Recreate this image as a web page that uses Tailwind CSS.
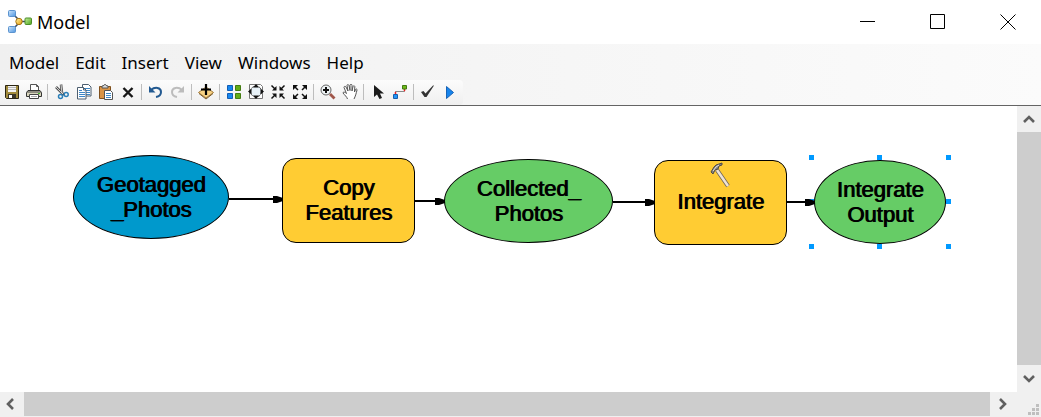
<!DOCTYPE html>
<html lang="en">
<head>
<meta charset="utf-8">
<meta name="viewport" content="width=device-width, initial-scale=1">
<title>Model</title>
<script src="https://cdn.jsdelivr.net/npm/@tailwindcss/browser@4"></script>
</head>
<body class="flex h-screen flex-col overflow-hidden bg-white font-['Noto_Sans','Open_Sans',sans-serif] text-black">

<header class="flex h-11 shrink-0 items-center pl-2">
  <svg class="h-6 w-6" viewBox="0 0 24 24" aria-hidden="true">
    <defs>
      <linearGradient id="blueBox" x2="1" y2="1"><stop stop-color="#cfe6fb"/><stop offset="1" stop-color="#4c94e0"/></linearGradient>
      <linearGradient id="greenBox" x2="1" y2="1"><stop stop-color="#c6ee9c"/><stop offset="1" stop-color="#4aa31c"/></linearGradient>
      <linearGradient id="goldDot" x2="1" y2="1"><stop stop-color="#fff3a0"/><stop offset="1" stop-color="#e39a08"/></linearGradient>
    </defs>
    <path d="M6 5l5 5M6 18l5-5M13 11.500h6" stroke="#3c4a5c" stroke-width="1.500" fill="none"/>
    <rect x=".5" y="3.500" width="7" height="6" rx="1" transform="translate(0 -3)" fill="url(#blueBox)" stroke="#5b93cf"/>
    <rect x=".5" y="16.500" width="7" height="6" rx="1" fill="url(#blueBox)" stroke="#5b93cf"/>
    <circle cx="11" cy="11.500" r="3.200" fill="url(#goldDot)" stroke="#a87412"/>
    <rect x="17" y="8" width="6.500" height="6.500" rx="1" fill="url(#greenBox)" stroke="#4b8d28"/>
  </svg>
  <h1 class="pl-[5px] text-[18px] leading-6">Model</h1>
  <div class="ml-auto flex h-full gap-[22px] pr-[9px]">
    <button class="flex w-12 items-center justify-center" aria-label="Minimize"><svg class="h-4 w-4" viewBox="0 0 16 16"><path d="M0 7.500h15" stroke="#000"/></svg></button>
    <button class="flex w-12 items-center justify-center" aria-label="Maximize"><svg class="h-4 w-4" viewBox="0 0 16 16"><path d="M.5.500h14v14H.5z" fill="none" stroke="#000"/></svg></button>
    <button class="flex w-12 items-center justify-center" aria-label="Close"><svg class="h-4 w-4" viewBox="0 0 16 16"><path d="M.5.500l15 15M15.500.500l-15 15" stroke="#000"/></svg></button>
  </div>
</header>

<div class="shrink-0 border-b border-[#646464] bg-linear-to-r from-[#f0f0f0] to-[#fbfbfb]">
  <nav class="flex h-9 items-center gap-4 pl-[9px] pt-[2px] text-[17px] leading-6" aria-label="Menu bar">
    <button>Model</button><button>Edit</button><button>Insert</button><button>View</button><button>Windows</button><button>Help</button>
  </nav>
  <div class="flex h-[25px] w-[463px] items-center rounded-r-sm bg-linear-to-b from-[#fcfcfc] to-[#efefef] pb-[2px] pl-px" role="toolbar" aria-label="Model tools">
    <button class="flex w-[22px] justify-center" aria-label="Save"><svg class="h-4 w-4" viewBox="0 0 16 16"><path d="M1.500 1.500h13v13h-12l-1-1z" fill="#a28b3c" stroke="#2c2613"/><path d="M4 2h8v6H4z" fill="#f4f4f4"/><path d="M4 3.500h8M4 5.500h8" stroke="#b9b9b9"/><path d="M4 10h8v4H4z" fill="#3a3629"/><path d="M5 11h3v3H5z" fill="#fff"/></svg></button>
    <button class="flex w-[22px] justify-center" aria-label="Print"><svg class="h-4 w-4" viewBox="0 0 16 16"><path d="M4.500 7V.5h6l2 2V7z" fill="#fff" stroke="#555"/><path d="M10.500.500v2h2" fill="none" stroke="#555"/><path d="M2 6.500h12l1.500 2v4h-15v-4z" fill="#d8d5bd" stroke="#333"/><path d="M1 8h14" stroke="#444"/><path d="M12 9.500h2" stroke="#45b82c"/><path d="M3.500 10.500h9v4h-9z" fill="#fff" stroke="#444"/><path d="M5 12.500h6" stroke="#aaa"/></svg></button>
    <span class="ml-[2px] mr-[3px] h-4 w-px bg-[#bdbdbd]"></span>
    <button class="flex w-[22px] justify-center" aria-label="Cut"><svg class="h-4 w-4" viewBox="0 0 16 16"><path d="M2 3l8 8M7 .500l1 9" stroke="#555" stroke-width="2.600"/><path d="M2 3l7 7M7 .500l1 9" stroke="#eee" stroke-width=".8"/><circle cx="6.500" cy="12.500" r="2" fill="none" stroke="#2b7fb8" stroke-width="1.500"/><circle cx="12.200" cy="10.500" r="2" fill="none" stroke="#2b7fb8" stroke-width="1.500"/></svg></button>
    <button class="flex w-[22px] justify-center" aria-label="Copy"><svg class="h-4 w-4" viewBox="0 0 16 16"><path d="M6.500.500h6l2.500 2.500v9H6.500z" fill="#fff" stroke="#4d5f70"/><path d="M8 4.500h6M8 6.500h6M8 8.500h6M8 10.500h6" stroke="#3d87c7"/><path d="M1.500 3.500h6l2.500 2.500v9H1.500z" fill="#fff" stroke="#4d5f70"/><path d="M7.500 3.500V6H10" fill="none" stroke="#4d5f70"/><path d="M3 6.500h3M3 8.500h6M3 10.500h6M3 12.500h6" stroke="#3d87c7"/></svg></button>
    <button class="flex w-[22px] justify-center" aria-label="Paste"><svg class="h-4 w-4" viewBox="0 0 16 16"><path d="M1.500 2.500h11v12h-11z" fill="#d99345" stroke="#80501d"/><path d="M4 4V2l2-.5.500-1h1L8 1.500l2 .500v2z" fill="#ddd" stroke="#555"/><path d="M6.500 6.500h6l2 2v7h-8z" fill="#fff" stroke="#555"/><path d="M8 9.500h5M8 11.500h5M8 13.500h5" stroke="#3d87c7"/></svg></button>
    <button class="flex w-[22px] justify-center" aria-label="Delete"><svg class="h-4 w-4" viewBox="0 0 16 16"><path d="M3.500 4l9 9M12.500 4l-9 9" stroke="#171717" stroke-width="2.400"/></svg></button>
    <span class="ml-[2px] mr-[3px] h-4 w-px bg-[#bdbdbd]"></span>
    <button class="flex w-[22px] justify-center" aria-label="Undo"><svg class="h-4 w-4" viewBox="0 0 16 16"><path d="M3 6c4-3.500 10-2.500 10 2 0 3-2 4.500-5 5" fill="none" stroke="#235a91" stroke-width="2"/><path d="M1 2v6.500h6.500z" fill="#235a91"/></svg></button>
    <button class="flex w-[22px] justify-center" aria-label="Redo" disabled><svg class="h-4 w-4" viewBox="0 0 16 16"><path d="M12 6C8 2.500 2 3.500 2 8c0 3 2 4.500 5 5" fill="none" stroke="#bcbcbc" stroke-width="2"/><path d="M14 2v6.500H7.500z" fill="#bcbcbc"/></svg></button>
    <span class="ml-[2px] mr-[3px] h-4 w-px bg-[#bdbdbd]"></span>
    <button class="flex w-[22px] justify-center" aria-label="Add data or tool"><svg class="h-4 w-4" viewBox="0 0 16 16"><path d="M8 3l7.500 5.500L8 14 .5 8.500z" fill="#f8d283" stroke="#a27a3b"/><path d="M1 9.500l7 5.500 7-5.500" fill="none" stroke="#7c5c2b"/><path d="M8 0v11M3 5.500h10" stroke="#000" stroke-width="2.200"/></svg></button>
    <span class="ml-[2px] mr-[3px] h-4 w-px bg-[#bdbdbd]"></span>
    <button class="flex w-[22px] justify-center" aria-label="Auto layout"><svg class="h-4 w-4" viewBox="0 0 16 16"><path d="M1.500 1.500h5v5h-5zM1.500 9.500h5v5h-5z" fill="#1687ef" stroke="#125db4"/><path d="M9.500 1.500h5v5h-5zM9.500 9.500h5v5h-5z" fill="#62ad16" stroke="#447c12"/></svg></button>
    <button class="flex w-[22px] justify-center" aria-label="Full extent"><svg class="h-4 w-4" viewBox="0 0 16 16"><path d="M1.500.500h11l2 2v12h-13z" fill="#fff" stroke="#777"/><circle cx="8" cy="7.500" r="5.500" fill="#e8f2f8" stroke="#555" stroke-dasharray="3 1"/><path d="M8 0l3 3.500H5zM8 15l3-3.500H5zM0 7.500l3.500-3v6zM16 7.500l-3.500-3v6z" fill="#111"/></svg></button>
    <button class="flex w-[22px] justify-center" aria-label="Fixed zoom out"><svg class="h-4 w-4" viewBox="0 0 16 16"><path d="M1.500 1.500l4 4M14.500 1.500l-4 4M1.500 14.500l4-4M14.500 14.500l-4-4" stroke="#111" stroke-width="1.500"/><path d="M6.500 2v4.500H2zM9.500 2v4.500H14zM6.500 14V9.500H2zM9.500 14V9.500H14z" fill="#111"/></svg></button>
    <button class="flex w-[22px] justify-center" aria-label="Fixed zoom in"><svg class="h-4 w-4" viewBox="0 0 16 16"><path d="M2 2l4 4M14 2l-4 4M2 14l4-4M14 14l-4-4" stroke="#111" stroke-width="1.500"/><path d="M1 1h5L1 6zM15 1h-5l5 5zM1 15h5l-5-5zM15 15h-5l5-5z" fill="#111"/></svg></button>
    <span class="ml-[2px] mr-[3px] h-4 w-px bg-[#bdbdbd]"></span>
    <button class="flex w-[22px] justify-center" aria-label="Zoom in"><svg class="h-4 w-4" viewBox="0 0 16 16"><path d="M10 10l4.500 4.500" stroke="#a0564a" stroke-width="2.800"/><circle cx="6" cy="6" r="5" fill="#eef3f5" stroke="#666"/><path d="M6 3v6M3 6h6" stroke="#111" stroke-width="2"/></svg></button>
    <button class="flex w-[22px] justify-center" aria-label="Pan"><svg class="h-4 w-4" viewBox="0 0 16 16"><path d="M5.500 15c-.5-2-3-4-4.500-6 0-1.500 2-1 3.500.500L2 3.500C2 2 3.500 2 4 3l2 4L5 1.500C5 .3 6.700.3 7 1.500L8 6.500V1.300C8 0 10 0 10 1.300V7l1-4.500c.3-1.200 2-.8 1.800.3L12.500 8l1-2.500c.5-1 1.800-.5 1.500.5-1 4-1.500 6-3 9" fill="#fff" stroke="#555" stroke-linejoin="round"/></svg></button>
    <span class="ml-[2px] mr-[3px] h-4 w-px bg-[#bdbdbd]"></span>
    <button class="flex w-[22px] justify-center" aria-label="Select"><svg class="h-4 w-4" viewBox="0 0 16 16"><path d="M4 1v12l3-2.500L9.500 15l2.500-1-2-4.500h4z" fill="#1b1b1b"/></svg></button>
    <button class="flex w-[22px] justify-center" aria-label="Connect"><svg class="h-4 w-4" viewBox="0 0 16 16"><path d="M3.500 10V7.500h9V5" fill="none" stroke="#888"/><path d="M3 8h1v2H3zM12 5h1v2h-1z" fill="#e22" stroke="#e22" stroke-width=".5"/><path d="M1.500 10.500h4v4h-4z" fill="#2594f5" stroke="#165fae"/><path d="M10.500 1.500h4v3.500h-4z" fill="#6fb91a" stroke="#427b12"/></svg></button>
    <span class="ml-[2px] mr-[3px] h-4 w-px bg-[#bdbdbd]"></span>
    <button class="flex w-[22px] justify-center" aria-label="Validate entire model"><svg class="h-4 w-4" viewBox="0 0 16 16"><path d="M1 8l2.500-1 2 2.500L13 1.500h1L6.500 13h-2z" fill="#333"/></svg></button>
    <button class="flex w-[22px] justify-center" aria-label="Run"><svg class="h-4 w-4" viewBox="0 0 16 16"><path d="M4.500 2.500l7 6-7 6z" fill="#1684ec" stroke="#1763b7"/></svg></button>
  </div>
</div>

<main class="grid min-h-0 flex-1 grid-cols-[1fr_24px] grid-rows-[1fr_25px] bg-white">
  <!-- Free diagram canvas: nodes and connectors sit at model coordinates -->
  <section class="relative overflow-hidden font-['Liberation_Sans',Arial,sans-serif] text-[22px] leading-[25px] [text-shadow:1px_0_0_#000]" aria-label="Model diagram">
    <i class="absolute left-[809px] top-[49px] size-[5px] bg-[#0099ff]"></i>
    <i class="absolute left-[877px] top-[49px] size-[5px] bg-[#0099ff]"></i>
    <i class="absolute left-[946px] top-[49px] size-[5px] bg-[#0099ff]"></i>
    <i class="absolute left-[809px] top-[93px] size-[5px] bg-[#0099ff]"></i>
    <i class="absolute left-[946px] top-[93px] size-[5px] bg-[#0099ff]"></i>
    <i class="absolute left-[809px] top-[138px] size-[5px] bg-[#0099ff]"></i>
    <i class="absolute left-[877px] top-[138px] size-[5px] bg-[#0099ff]"></i>
    <i class="absolute left-[946px] top-[138px] size-[5px] bg-[#0099ff]"></i>
    <div class="absolute left-[73px] top-[49px] flex h-[84px] w-[156px] items-center justify-center rounded-[50%] border border-black bg-[#0099cc] text-center">Geotagged<br>_Photos</div>
    <div class="absolute left-[282px] top-[52px] flex h-[85px] w-[133px] items-center justify-center rounded-[14px] border border-black bg-[#ffcc33] pb-[2px] text-center">Copy<br>Features</div>
    <div class="absolute left-[444px] top-[53px] flex h-[84px] w-[169px] items-center justify-center rounded-[50%] border border-black bg-[#66cc66] text-center">Collected_<br>Photos</div>
    <div class="absolute left-[654px] top-[54px] flex h-[85px] w-[133px] items-center justify-center rounded-[14px] border border-black bg-[#ffcc33] pb-[2px] text-center">Integrate</div>
    <div class="absolute left-[814px] top-[54px] flex h-[84px] w-[132px] items-center justify-center rounded-[50%] border border-black bg-[#66cc66] text-center">Integrate<br>Output</div>
    <svg class="absolute left-0 top-0 h-[286px] w-[1017px]" viewBox="0 0 1017 286" aria-hidden="true">
      <path d="M229 93h45M415 95h21M613 96h33M787 96h20" stroke="#000" stroke-width="2"/>
      <path d="M273 90h4l6 2v3l-6 2h-4zM435 92h4l6 2v3l-6 2h-4zM645 93h4l6 2v3l-6 2h-4zM805 93h4l6 2v3l-6 2h-4z" fill="#000"/>
      <path d="M717 64l11 16" stroke="#6b6259" stroke-width="4"/>
      <path d="M717 64l11 16" stroke="#eee3d5" stroke-width="2.500"/>
      <path d="M711 66l3-5 2-2 6-2v2l-3 1-1 3-3 1-2 4z" fill="#85827f" stroke="#4f4b49"/>
      <path d="M713 65l3-4 3-2" stroke="#e7e3df" fill="none"/>
    </svg>
  </section>
  <div class="flex flex-col bg-[#f0f0f0]">
    <button class="flex h-[26px] shrink-0 items-center justify-center" aria-label="Scroll up"><svg class="h-3 w-3" viewBox="0 0 12 12"><path d="M1 9l5-5 5 5" fill="none" stroke="#606060" stroke-width="2.600"/></svg></button>
    <div class="flex-1 bg-[#cdcdcd]"></div>
    <button class="flex h-[27px] shrink-0 items-center justify-center" aria-label="Scroll down"><svg class="h-3 w-3" viewBox="0 0 12 12"><path d="M1 3l5 5 5-5" fill="none" stroke="#606060" stroke-width="2.600"/></svg></button>
  </div>
  <div class="flex bg-[#f0f0f0] pb-px">
    <button class="flex w-6 shrink-0 items-center justify-center pr-[2px]" aria-label="Scroll left"><svg class="h-3 w-3" viewBox="0 0 12 12"><path d="M8 1L3 6l5 5" fill="none" stroke="#606060" stroke-width="2.600"/></svg></button>
    <div class="flex-1 bg-[#cdcdcd]"></div>
    <button class="flex w-[27px] shrink-0 items-center justify-center pr-[2px]" aria-label="Scroll right"><svg class="h-3 w-3" viewBox="0 0 12 12"><path d="M3 1l5 5-5 5" fill="none" stroke="#606060" stroke-width="2.600"/></svg></button>
  </div>
  <div class="flex items-end justify-end bg-[#f0f0f0] pb-[2px] pr-[2px]">
    <svg class="h-[11px] w-[11px]" viewBox="0 0 11 11" aria-hidden="true"><path d="M8 0h3v3H8zM4 4h3v3H4zM8 4h3v3H8zM0 8h3v3H0zM4 8h3v3H4zM8 8h3v3H8z" fill="#bfbfbf"/></svg>
  </div>
</main>
</body>
</html>
